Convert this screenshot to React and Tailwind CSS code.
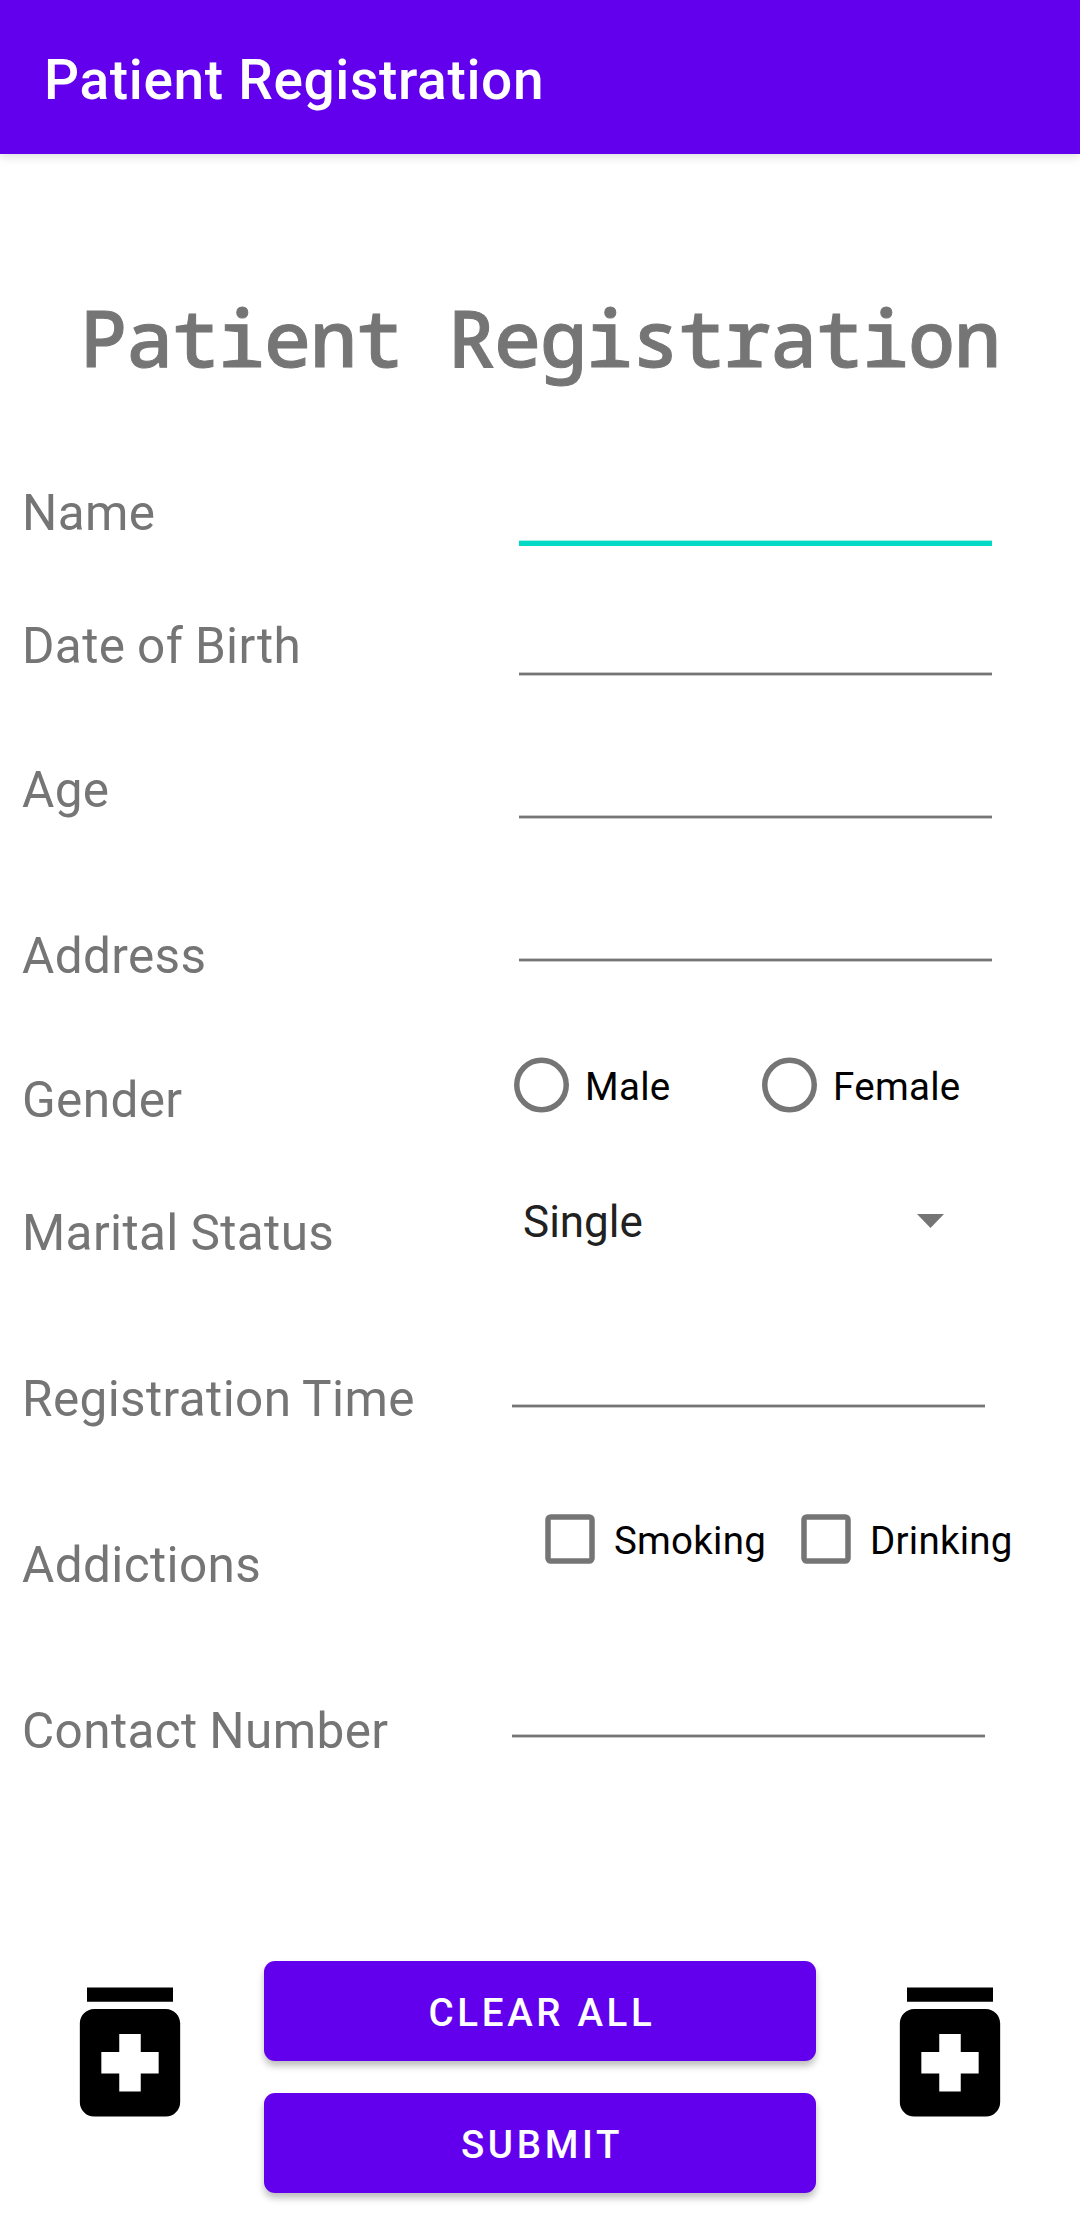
const labels = [
  ["Name", "mt-0"],
  ["Date of Birth", "mt-[67px]"],
  ["Age", "mt-[78px]"],
  ["Address", "mt-[100px]"],
  ["Gender", "mt-[78px]"],
  ["Marital Status", "mt-[67px]"],
  ["Registration Time", "mt-[100px]"],
  ["Addictions", "mt-[100px]"],
  ["Contact Number", "mt-[100px]"],
];

function Title({ children }) {
  return (
    <h1 className="mt-[139px] mb-[3px] h-[88px] text-center text-[78.5px] leading-[88px] font-medium tracking-[-1.1px] whitespace-pre text-[#757575] [-webkit-text-stroke:1px_#757575] font-['Noto_Sans_Mono','DejaVu_Sans_Mono',monospace]">
      {children}
    </h1>
  );
}

function Radio({ label }) {
  return (
    <label className="flex w-[248px] items-center text-[38.5px] leading-[46px] tracking-[0.3px] text-black">
      <svg viewBox="0 0 55 56" className="h-[56px] w-[55px] shrink-0" fill="none" stroke="#757575" strokeWidth="5.5">
        <circle cx="27.5" cy="28" r="24.75" />
      </svg>
      <span className="ml-[16px] pt-[3px]">{label}</span>
    </label>
  );
}

function Checkbox({ label }) {
  return (
    <label className="flex w-[256px] items-center text-[38.5px] leading-[46px] tracking-[0.25px] text-black">
      <svg viewBox="0 0 50 50" className="size-[50px] shrink-0" fill="none" stroke="#757575" strokeWidth="5.5">
        <rect x="3" y="3" width="44" height="44" rx="2.75" />
      </svg>
      <span className="ml-[19px] pt-[3px]">{label}</span>
    </label>
  );
}

function Underline({ className }) {
  return <div className={`h-[4px] w-[473px] border-y border-[#c8c8c8] bg-[#757575] ${className}`} />;
}

function Medication() {
  return (
    <svg viewBox="0 0 24 24" className="mt-[4.5px] size-[172px]" fill="#000">
      <path d="M6 3h12v2H6zm11 3H7c-1.1 0-2 .9-2 2v11c0 1.1.9 2 2 2h10c1.1 0 2-.9 2-2V8c0-1.1-.9-2-2-2zm-1 9h-2.5v2.5h-3V15H8v-3h2.5V9.5h3V12H16v3z" />
    </svg>
  );
}

function Button({ children }) {
  return (
    <button className="h-[100px] w-[552px] rounded-[11px] bg-[#6200ee] pt-[3px] pl-[4px] text-[38.5px] leading-[46px] font-medium tracking-[3.65px] text-white shadow-[0_5px_7px_rgba(0,0,0,0.26)]">
      {children}
    </button>
  );
}

export default function App() {
  return (
    <div className="flex h-[2220px] w-[1080px] flex-col overflow-hidden bg-white font-['Roboto',sans-serif]">
      <header className="flex h-[154px] shrink-0 items-center bg-[#6200ee] pt-[6px] pl-[44px] text-[55px] font-medium tracking-[0.66px] text-white shadow-[0_2px_10px_rgba(0,0,0,0.15)]">
        Patient Registration
      </header>

      <Title>Patient Registration</Title>

      <main className="mt-[96px] flex h-[1481px] shrink-0">
        <div className="w-[490px] pl-[22px] text-[49.5px] leading-[66px] tracking-[0.38px] [word-spacing:-1px] text-[#757575]">
          {labels.map(([text, gap]) => (
            <div key={text} className={gap}>{text}</div>
          ))}
        </div>

        <div className="flex flex-col items-start">
          <div className="mt-[60px] ml-[29px] h-[6px] w-[473px] border-t border-[#a5efe8] bg-[#03dac5]" />
          <Underline className="mt-[126px] ml-[29px]" />
          <Underline className="mt-[139px] ml-[29px]" />
          <Underline className="mt-[139px] ml-[29px]" />
          <div className="mt-[95px] ml-[24px] flex">
            <Radio label="Male" />
            <Radio label="Female" />
          </div>
          <div className="mt-[82px] ml-[33px] flex h-[52px] w-[421px] items-center justify-between text-[44px] leading-[52px] text-[#212121]">
            <span className="pt-[2px]">Single</span>
            <svg viewBox="0 0 27 14" className="h-[14px] w-[27px]" fill="#757575">
              <path d="M0 0h27L13.5 14z" />
            </svg>
          </div>
          <Underline className="mt-[157px] ml-[22px]" />
          <div className="mt-[106px] ml-[55px] flex">
            <Checkbox label="Smoking" />
            <Checkbox label="Drinking" />
          </div>
          <Underline className="mt-[170px] ml-[22px]" />
        </div>
      </main>

      <footer className="flex shrink-0 items-start justify-between px-[44px]">
        <Medication />
        <div className="flex flex-col gap-8">
          <Button>CLEAR ALL</Button>
          <Button>SUBMIT</Button>
        </div>
        <Medication />
      </footer>
    </div>
  );
}
